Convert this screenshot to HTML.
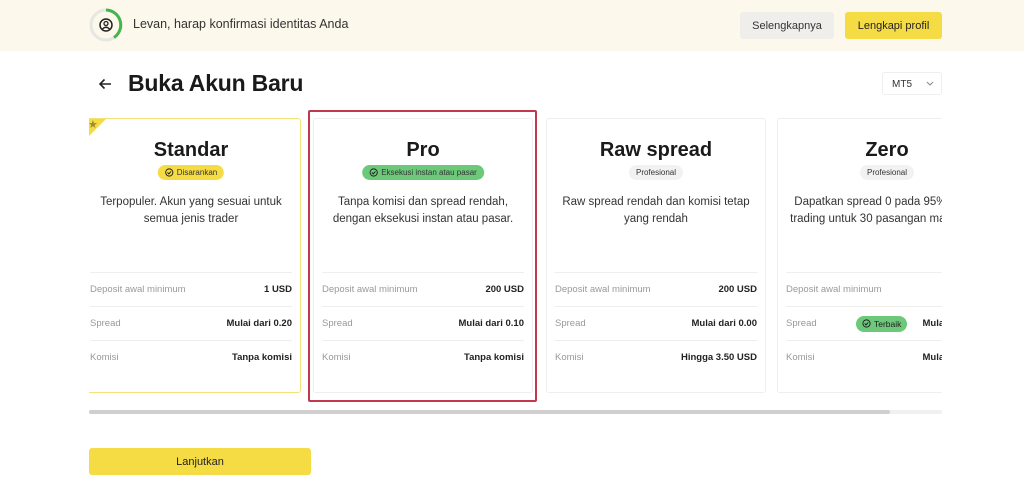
<!DOCTYPE html>
<html><head><meta charset="utf-8"><style>
*{margin:0;padding:0;box-sizing:border-box}
body{width:1024px;height:483px;background:#fff;font-family:"Liberation Sans",sans-serif;color:#222;position:relative;overflow:hidden}
.abs{position:absolute}
.top{left:0;top:0;width:1024px;height:51px;background:#fdf8ec}
.btn{position:absolute;border-radius:3px;font-size:11px;display:flex;align-items:center;justify-content:center;color:#333}
.strip{position:absolute;left:89px;top:105px;width:853px;height:300px;overflow:hidden}
.card{position:absolute;top:13px;width:220px;height:275px;border:1px solid #eee;border-radius:3px;background:#fff}
.card h2{position:absolute;top:20px;left:0;width:100%;text-align:center;font-size:20px;font-weight:bold;color:#1a1a1a}
.badge{position:absolute;top:46px;left:50%;transform:translateX(-50%);height:15px;border-radius:8px;font-size:8px;padding:0 7px;display:flex;align-items:center;gap:3px;white-space:nowrap;color:#333}
.desc{position:absolute;top:75px;left:0;width:100%;text-align:center;font-size:11.5px;line-height:17px;color:#333}
.rows{position:absolute;left:8px;right:8px;top:153px}
.row{height:34px;border-top:1px solid #eee;display:flex;align-items:center;justify-content:space-between;font-size:9.5px}
.row span:first-child{color:#999}
.row b{color:#222;font-size:9.5px}
</style></head><body>
<div class="abs top"></div>
<svg class="abs" style="left:89px;top:8px" width="34" height="34" viewBox="0 0 34 34"><circle cx="17" cy="17" r="15" fill="none" stroke="#e6e6e2" stroke-width="3"/><path d="M17 2 A15 15 0 0 1 25 29.5" fill="none" stroke="#43b54b" stroke-width="3"/><circle cx="17" cy="17" r="6" fill="none" stroke="#222" stroke-width="1.5"/><circle cx="17" cy="15.5" r="2" fill="none" stroke="#222" stroke-width="1.3"/><path d="M13.5 21 Q17 17.5 20.5 21" fill="none" stroke="#222" stroke-width="1.3"/></svg>
<div class="abs" style="left:133px;top:17px;font-size:12.5px;color:#333">Levan, harap konfirmasi identitas Anda</div>
<div class="btn" style="left:740px;top:12px;width:94px;height:27px;background:#efeeea">Selengkapnya</div>
<div class="btn" style="left:845px;top:12px;width:97px;height:27px;background:#f5dc45;color:#222">Lengkapi profil</div>
<svg class="abs" style="left:98px;top:78px" width="14" height="12" viewBox="0 0 14 12"><path d="M13 6H2M6.5 1.5 2 6l4.5 4.5" fill="none" stroke="#222" stroke-width="1.6"/></svg>
<div class="abs" style="left:128px;top:70px;font-size:23px;font-weight:bold;color:#1a1a1a;letter-spacing:-0.2px">Buka Akun Baru</div>
<div class="abs" style="left:882px;top:72px;width:60px;height:23px;border:1px solid #eee;border-radius:3px;font-size:10px;padding:6px 0 0 9px;color:#333">MT5<svg style="position:absolute;left:43px;top:8px" width="8" height="5" viewBox="0 0 8 5"><path d="M1 1l3 3 3-3" fill="none" stroke="#888" stroke-width="1"/></svg></div>
<div class="abs" style="left:308px;top:110px;width:229px;height:292px;border:2px solid #c0394e;border-radius:2px"></div>
<div class="strip">
 <div class="card" style="left:-8px;border-color:#f3e27a">
  <div class="abs" style="left:0;top:0;width:0;height:0;border-top:24px solid #f5dc45;border-right:24px solid transparent"></div>
  <div class="abs" style="left:6px;top:-1px;font-size:11px;color:#a08a2a">★</div>
  <h2>Standar</h2>
  <div class="badge" style="background:#f5dc45"><svg width="9" height="9" viewBox="0 0 10 10"><circle cx="5" cy="5" r="4" fill="none" stroke="#222" stroke-width="1.1"/><path d="M3 5l1.5 1.5L7 3.8" fill="none" stroke="#222" stroke-width="1.1"/></svg>Disarankan</div>
  <div class="desc">Terpopuler. Akun yang sesuai untuk<br>semua jenis trader</div>
  <div class="rows"><div class="row"><span>Deposit awal minimum</span><b>1 USD</b></div><div class="row"><span>Spread</span><b>Mulai dari 0.20</b></div><div class="row"><span>Komisi</span><b>Tanpa komisi</b></div></div>
 </div>
 <div class="card" style="left:224px">
  <h2>Pro</h2>
  <div class="badge" style="background:#6cc97a"><svg width="9" height="9" viewBox="0 0 10 10"><circle cx="5" cy="5" r="4" fill="none" stroke="#222" stroke-width="1.1"/><path d="M3 5l1.5 1.5L7 3.8" fill="none" stroke="#222" stroke-width="1.1"/></svg>Eksekusi instan atau pasar</div>
  <div class="desc">Tanpa komisi dan spread rendah,<br>dengan eksekusi instan atau pasar.</div>
  <div class="rows"><div class="row"><span>Deposit awal minimum</span><b>200 USD</b></div><div class="row"><span>Spread</span><b>Mulai dari 0.10</b></div><div class="row"><span>Komisi</span><b>Tanpa komisi</b></div></div>
 </div>
 <div class="card" style="left:457px">
  <h2>Raw spread</h2>
  <div class="badge" style="background:#f2f2f2">Profesional</div>
  <div class="desc">Raw spread rendah dan komisi tetap<br>yang rendah</div>
  <div class="rows"><div class="row"><span>Deposit awal minimum</span><b>200 USD</b></div><div class="row"><span>Spread</span><b>Mulai dari 0.00</b></div><div class="row"><span>Komisi</span><b>Hingga 3.50 USD</b></div></div>
 </div>
 <div class="card" style="left:688px">
  <h2>Zero</h2>
  <div class="badge" style="background:#f2f2f2">Profesional</div>
  <div class="desc" style="white-space:nowrap">Dapatkan spread 0 pada 95% waktu<br>trading untuk 30 pasangan mata uang</div>
  <div class="rows"><div class="row"><span>Deposit awal minimum</span><b>200 USD</b></div><div class="row"><span>Spread</span><span style="position:absolute;left:70px;background:#6cc97a;border-radius:8px;height:16px;padding:0 6px;display:flex;align-items:center;gap:3px;font-size:8.5px;color:#222"><svg width="9" height="9" viewBox="0 0 10 10"><circle cx="5" cy="5" r="4" fill="none" stroke="#222" stroke-width="1.1"/><path d="M3 5l1.5 1.5L7 3.8" fill="none" stroke="#222" stroke-width="1.1"/></svg>Terbaik</span><b>Mulai dari 0.00</b></div><div class="row"><span>Komisi</span><b>Mulai dari 0.05</b></div></div>
 </div>
</div>
<div class="abs" style="left:89px;top:410px;width:853px;height:4px;background:#f0f0f0;border-radius:2px"></div>
<div class="abs" style="left:89px;top:410px;width:801px;height:4px;background:#cfcfcf;border-radius:2px"></div>
<div class="btn" style="left:89px;top:448px;width:222px;height:27px;background:#f5dc45;color:#222">Lanjutkan</div>
</body></html>
